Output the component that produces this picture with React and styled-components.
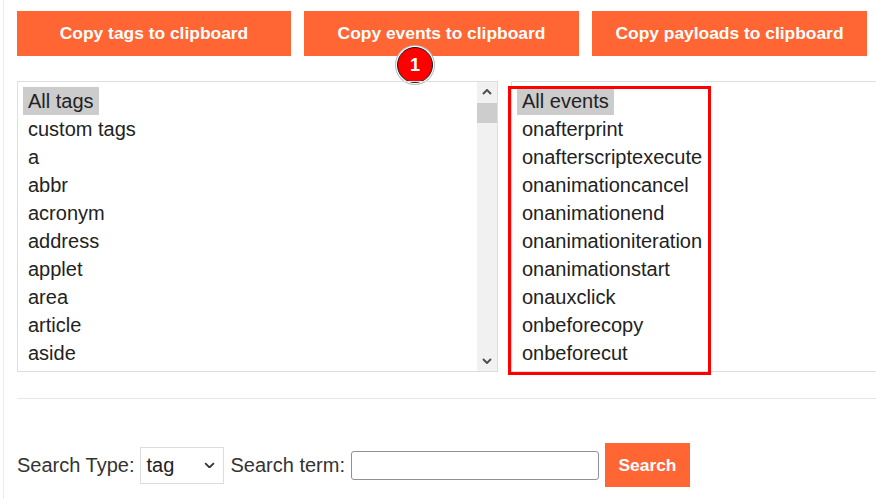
import React from 'react';
import styled, { createGlobalStyle } from 'styled-components';

const GlobalStyle = createGlobalStyle`
  body {
    margin: 0;
    overflow: hidden;
    background: #fff;
    font-family: "Liberation Sans", Arial, sans-serif;
    color: #222;
  }
`;

const Page = styled.div`
  margin-left: 3px;
  border-left: 1px solid #ececec;
  padding: 11px 0 0 13px;
  min-height: 100vh;
  box-sizing: border-box;
  overflow: hidden;
`;

const ButtonRow = styled.div`
  position: relative;
  display: flex;
  gap: 13px;
`;

const OrangeButton = styled.button`
  flex-shrink: 0;
  width: ${props => props.$width}px;
  height: ${props => props.$height}px;
  background: #ff6633;
  color: #fff;
  border: none;
  font-family: "Liberation Sans", Arial, sans-serif;
  font-weight: bold;
  font-size: 17.4px;
  padding: 0;
  cursor: pointer;
`;

const Badge = styled.div`
  position: absolute;
  left: 380px;
  top: 36px;
  width: 34px;
  height: 34px;
  border-radius: 50%;
  background: #f00;
  border: 1.5px solid #1a1a1a;
  box-shadow: 0 0 0 1px #fff, 0 0 0 2px #bbb;
  color: #fff;
  font-weight: bold;
  font-size: 18px;
  display: flex;
  align-items: center;
  justify-content: center;
`;

const ListsRow = styled.div`
  display: flex;
  gap: 13px;
  margin-top: 25px;
`;

const ListBox = styled.div`
  position: relative;
  flex-shrink: 0;
  width: ${props => props.$width}px;
  height: 291px;
  box-sizing: border-box;
  border: 1px solid #dedede;
  display: flex;
`;

const List = styled.div`
  flex: 1;
  padding: 5px 0 0 5px;
  overflow: hidden;
`;

const Item = styled.div`
  width: fit-content;
  padding: 0 5px;
  height: 28px;
  line-height: 28px;
  font-size: 20px;
  color: #222;
  white-space: nowrap;
  background: ${props => (props.$selected ? '#cccccc' : 'transparent')};
`;

const Scrollbar = styled.div`
  width: 20px;
  background: #f1f1f1;
  display: flex;
  flex-direction: column;
`;

const ScrollArrow = styled.div`
  height: 20px;
  display: flex;
  align-items: center;
  justify-content: center;
`;

const Thumb = styled.div`
  height: 20px;
  margin-top: 1px;
  background: #cdcdcd;
`;

const Track = styled.div`
  flex: 1;
`;

const Annotation = styled.div`
  position: absolute;
  left: -4px;
  top: 4px;
  width: 203px;
  height: 289px;
  box-sizing: border-box;
  border: 3px solid #ff0000;
  pointer-events: none;
`;

const Divider = styled.div`
  height: 1px;
  background: #e4eaea;
  margin-top: 26px;
`;

const SearchRow = styled.div`
  display: flex;
  align-items: center;
  gap: 6px;
  margin-top: 44px;
  font-size: 20px;
  color: #333;
`;

const Label = styled.span`
  white-space: nowrap;
`;

const SelectBox = styled.div`
  width: 84px;
  height: 37px;
  box-sizing: border-box;
  border: 1px solid #dddddd;
  display: flex;
  align-items: center;
  justify-content: space-between;
  padding: 0 8px 0 5px;
  color: #222;
`;

const TextInput = styled.input`
  width: 248px;
  height: 29px;
  box-sizing: border-box;
  border: 1px solid #8f8f9d;
  border-radius: 3px;
  font-size: 16px;
`;

const Chevron = ({ up, size = 10, color = '#505050', width = 2 }) => (
  <svg width={size} height={size * 0.6} viewBox="0 0 10 6">
    <polyline
      points={up ? '1,5 5,1 9,5' : '1,1 5,5 9,1'}
      fill="none"
      stroke={color}
      strokeWidth={width}
    />
  </svg>
);

const tags = ['All tags', 'custom tags', 'a', 'abbr', 'acronym', 'address', 'applet', 'area', 'article', 'aside'];
const events = [
  'All events',
  'onafterprint',
  'onafterscriptexecute',
  'onanimationcancel',
  'onanimationend',
  'onanimationiteration',
  'onanimationstart',
  'onauxclick',
  'onbeforecopy',
  'onbeforecut',
];

export default function App() {
  return (
    <>
      <GlobalStyle />
      <Page>
        <ButtonRow>
          <OrangeButton $width={274} $height={45}>Copy tags to clipboard</OrangeButton>
          <OrangeButton $width={275} $height={45}>Copy events to clipboard</OrangeButton>
          <OrangeButton $width={275} $height={45}>Copy payloads to clipboard</OrangeButton>
          <Badge>1</Badge>
        </ButtonRow>

        <ListsRow>
          <ListBox $width={481}>
            <List>
              {tags.map((t, i) => (
                <Item key={t} $selected={i === 0}>{t}</Item>
              ))}
            </List>
            <Scrollbar>
              <ScrollArrow><Chevron up /></ScrollArrow>
              <Thumb />
              <Track />
              <ScrollArrow><Chevron /></ScrollArrow>
            </Scrollbar>
          </ListBox>
          <ListBox $width={420}>
            <List>
              {events.map((e, i) => (
                <Item key={e} $selected={i === 0}>{e}</Item>
              ))}
            </List>
            <Annotation />
          </ListBox>
        </ListsRow>

        <Divider />

        <SearchRow>
          <Label>Search Type:</Label>
          <SelectBox>
            <span>tag</span>
            <Chevron size={11} color="#333" width={1.6} />
          </SelectBox>
          <Label>Search term:</Label>
          <TextInput type="text" />
          <OrangeButton $width={85} $height={44}>Search</OrangeButton>
        </SearchRow>
      </Page>
    </>
  );
}
